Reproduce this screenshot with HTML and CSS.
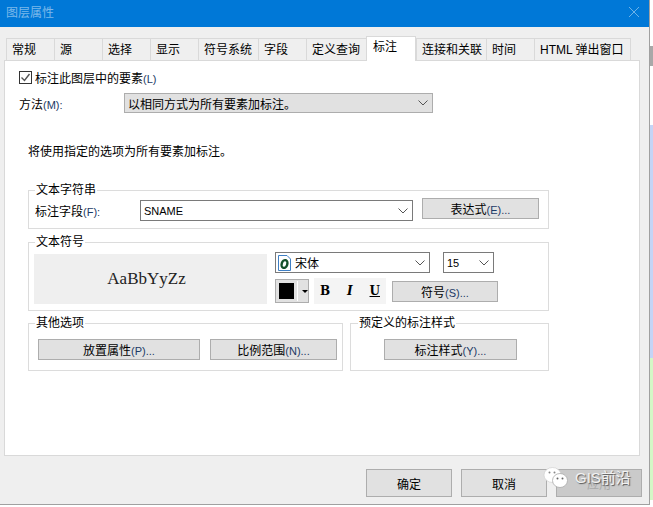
FILE: index.html
```html
<!DOCTYPE html>
<html lang="zh-CN">

<head>
    <meta charset="UTF-8">
    <title>图层属性</title>
    <link rel="stylesheet" href="styles.css">
</head>

<body>
    <svg class="defs" width="0" height="0">
        <symbol id="chevron" viewBox="0 0 10 6">
            <polyline points="0.5,0.5 5,5 9.5,0.5" fill="none" stroke="#555" stroke-width="1" />
        </symbol>
    </svg>

    <div class="screen">
        <div class="window">
            <div class="titlebar">
                <span class="title">图层属性</span>
                <svg class="close" width="10" height="10" viewBox="0 0 10 10">
                    <path d="M0 0L10 10M10 0L0 10" stroke="#6db2e8" stroke-width="1" />
                </svg>
            </div>

            <div class="tabs">
                <div class="tab w48">常规</div>
                <div class="tab w48">源</div>
                <div class="tab w48">选择</div>
                <div class="tab w48">显示</div>
                <div class="tab w60">符号系统</div>
                <div class="tab w48">字段</div>
                <div class="tab w60">定义查询</div>
                <div class="tab active">标注</div>
                <div class="tab w70">连接和关联</div>
                <div class="tab w48">时间</div>
                <div class="tab w97">HTML 弹出窗口</div>
            </div>

            <div class="panel">
                <label class="check-row">
                    <span class="checkbox">
                        <svg width="11" height="11" viewBox="0 0 11 11">
                            <polyline points="1.5,5.5 4.5,8.5 9.5,2" fill="none" stroke="#555" stroke-width="1.4" />
                        </svg>
                    </span>
                    <span>标注此图层中的要素<span class="key">(L)</span></span>
                </label>

                <div class="method-row">
                    <span class="method-label">方法<span class="key">(M):</span></span>
                    <div class="combo method-combo">
                        <span>以相同方式为所有要素加标注。</span>
                        <svg class="chevron" width="10" height="6"><use href="#chevron" /></svg>
                    </div>
                </div>

                <p class="note">将使用指定的选项为所有要素加标注。</p>

                <fieldset class="group group-string">
                    <legend>文本字符串</legend>
                    <div class="group-body">
                        <span class="field-label">标注字段<span class="key">(F):</span></span>
                        <div class="combo field-combo">
                            <span class="latin">SNAME</span>
                            <svg class="chevron" width="10" height="6"><use href="#chevron" /></svg>
                        </div>
                        <button class="btn btn-expr">表达式<span class="key">(E)...</span></button>
                    </div>
                </fieldset>

                <fieldset class="group group-symbol">
                    <legend>文本符号</legend>
                    <div class="group-body">
                        <div class="preview">AaBbYyZz</div>
                        <div class="symbol-controls">
                            <div class="symbol-row">
                                <div class="combo font-combo">
                                    <svg class="font-icon" width="15" height="18" viewBox="0 0 15 18">
                                        <path d="M1.5 1.5H10L13.5 5V16.5H1.5Z" fill="#fff" stroke="#3f7fc4" />
                                        <ellipse cx="7.5" cy="10" rx="2.8" ry="4" transform="rotate(18 7.5 10)" fill="none" stroke="#14502a" stroke-width="2.4" />
                                    </svg>
                                    <span>宋体</span>
                                    <svg class="chevron" width="10" height="6"><use href="#chevron" /></svg>
                                </div>
                                <div class="combo size-combo">
                                    <span class="latin">15</span>
                                    <svg class="chevron" width="10" height="6"><use href="#chevron" /></svg>
                                </div>
                            </div>
                            <div class="symbol-row style-row">
                                <div class="color-btn">
                                    <span class="swatch"></span>
                                    <span class="color-sep"></span>
                                    <span class="color-arrow"></span>
                                </div>
                                <div class="style-btns">
                                    <span class="style-b">B</span>
                                    <span class="style-i">I</span>
                                    <span class="style-u">U</span>
                                </div>
                                <button class="btn btn-symbol">符号<span class="key">(S)...</span></button>
                            </div>
                        </div>
                    </div>
                </fieldset>

                <div class="group-row">
                    <fieldset class="group group-other">
                        <legend>其他选项</legend>
                        <div class="group-body">
                            <button class="btn btn-place">放置属性<span class="key">(P)...</span></button>
                            <button class="btn btn-scale">比例范围<span class="key">(N)...</span></button>
                        </div>
                    </fieldset>
                    <fieldset class="group group-preset">
                        <legend>预定义的标注样式</legend>
                        <div class="group-body">
                            <button class="btn btn-style">标注样式<span class="key">(Y)...</span></button>
                        </div>
                    </fieldset>
                </div>
            </div>

            <div class="footer">
                <button class="btn btn-footer">确定</button>
                <button class="btn btn-footer">取消</button>
                <button class="btn btn-footer btn-disabled">应用</button>
            </div>
        </div>

        <div class="strip">
            <div class="strip-blank"></div>
            <div class="strip-gray"></div>
            <div class="strip-white"></div>
            <div class="strip-blue"></div>
            <div class="strip-green"></div>
        </div>

        <!-- watermark over the dialog -->
        <div class="watermark">
            <svg width="26" height="22" viewBox="0 0 26 22">
                <ellipse cx="9.5" cy="8" rx="8.5" ry="7.5" fill="#fff" stroke="#ccc" stroke-width="0.6" />
                <ellipse cx="17" cy="13.5" rx="7.5" ry="7" fill="#fff" stroke="#aaa" stroke-width="0.8" />
                <circle cx="6.5" cy="5.5" r="1" fill="#888" />
                <circle cx="11.5" cy="5.5" r="1" fill="#888" />
                <circle cx="14.5" cy="11.5" r="1" fill="#666" />
                <circle cx="19.5" cy="11.5" r="1" fill="#666" />
            </svg>
            <span>GIS前沿</span>
        </div>
    </div>
</body>

</html>
```

FILE: styles.css
```css
* {
    margin: 0;
    padding: 0;
    box-sizing: border-box;
}

body {
    background: #fff;
    color: #000;
    font-family: "Liberation Sans", "Noto Sans CJK SC", sans-serif;
    font-size: 12px;
    overflow: hidden;
}

.defs {
    position: absolute;
}

.screen {
    position: relative;
    display: flex;
    width: 653px;
    height: 507px;
}

.window {
    width: 650px;
    height: 505px;
    background: #efefef;
    border-right: 1px solid #a0a0a0;
    border-bottom: 1px solid #a0a0a0;
}

.titlebar {
    display: flex;
    align-items: center;
    justify-content: space-between;
    height: 27px;
    padding: 0 10px 5px 6px;
    background: #0078d7;
}

.title {
    color: #7db9ea;
}

.close {
    margin-bottom: -1px;
}

/* tabs */
.tabs {
    display: flex;
    align-items: flex-end;
    height: 33px;
    padding-left: 6px;
}

.tab {
    height: 22px;
    padding: 2px 0 0 5px;
    line-height: 18px;
    border: 1px solid #d9d9d9;
    border-bottom: none;
    border-right: none;
}

.w48 { width: 48px; }
.w60 { width: 60px; }
.w70 { width: 70px; }
.w97 { width: 97px; border-right: 1px solid #d9d9d9; }

.tab.active {
    position: relative;
    width: 50px;
    height: 25px;
    margin-bottom: -1px;
    padding: 1px 0 0 6px;
    background: #fff;
    border-right: 1px solid #d9d9d9;
    z-index: 1;
}

.panel {
    width: 636px;
    height: 396px;
    margin-left: 4px;
    padding: 8px 0 0 14px;
    background: #fff;
    border: 1px solid #d9d9d9;
}

.key {
    font-size: 11px;
    color: #1c3a66;
}

.check-row {
    display: flex;
    align-items: center;
    height: 17px;
    gap: 3px;
}

.checkbox {
    display: flex;
    align-items: center;
    justify-content: center;
    width: 13px;
    height: 13px;
    border: 1px solid #333;
}

.method-row {
    display: flex;
    align-items: center;
    margin-top: 7px;
}

.method-label {
    width: 105px;
}

.combo {
    display: flex;
    align-items: center;
    height: 21px;
    padding-left: 3px;
    background: #fff;
    border: 1px solid #7a7a7a;
}

.combo .chevron {
    margin-left: auto;
    margin-right: 4px;
}

.method-combo {
    width: 309px;
    height: 20px;
    background: #e1e1e1;
    border-color: #adadad;
}

.note {
    height: 16px;
    margin: 31px 0 0 9px;
    line-height: 16px;
}

.latin {
    font-size: 11px;
}

/* group boxes */
.group {
    margin-left: 9px;
    border: 1px solid #dcdcdc;
}

.group legend {
    height: 16px;
    margin-left: 6px;
    padding: 0 1px;
    line-height: 16px;
}

.group-body {
    display: flex;
    align-items: flex-start;
}

.group-string {
    width: 521px;
    height: 47px;
    margin-top: 22px;
}

.group-string .group-body {
    padding-left: 6px;
}

.field-label {
    width: 105px;
    margin-top: 4px;
}

.field-combo {
    width: 273px;
    margin-top: 2px;
}

.btn {
    height: 21px;
    font-family: inherit;
    font-size: 12px;
    color: #000;
    background: #e1e1e1;
    border: 1px solid #adadad;
}

.btn-expr {
    width: 117px;
    margin-left: 9px;
}

.group-symbol {
    width: 521px;
    height: 77px;
    margin-top: 5px;
}

.group-symbol .group-body {
    padding-left: 5px;
}

.preview {
    width: 233px;
    height: 50px;
    margin-top: 4px;
    padding-right: 8px;
    font-family: "Liberation Serif", serif;
    font-size: 17px;
    line-height: 50px;
    text-align: center;
    color: #222;
    background: #efefef;
}

.symbol-controls {
    margin: 2px 0 0 8px;
}

.symbol-row {
    display: flex;
    align-items: flex-start;
}

.style-row {
    margin-top: 5px;
}

.font-combo {
    width: 155px;
    padding-left: 1px;
    gap: 3px;
}

.size-combo {
    width: 51px;
    margin-left: 13px;
}

.color-btn {
    display: flex;
    align-items: center;
    width: 34px;
    height: 24px;
    margin-top: 1px;
    padding-left: 3px;
    background: #e1e1e1;
    border: 1px solid #adadad;
}

.swatch {
    width: 16px;
    height: 16px;
    background: #000;
}

.color-sep {
    width: 1px;
    height: 20px;
    margin-left: 3px;
    background: #fff;
}

.color-arrow {
    width: 0;
    height: 0;
    margin-left: 4px;
    border-top: 3px solid #000;
    border-left: 3px solid transparent;
    border-right: 3px solid transparent;
}

.style-btns {
    display: flex;
    align-items: center;
    justify-content: space-between;
    width: 72px;
    height: 26px;
    margin-left: 5px;
    padding: 0 6px;
    font-family: "DejaVu Serif", serif;
    font-size: 12px;
    font-weight: bold;
    background: #f4f4f4;
}

.style-i {
    font-style: italic;
}

.style-u {
    text-decoration: underline;
}

.btn-symbol {
    width: 106px;
    margin: 3px 0 0 6px;
}

.group-row {
    display: flex;
    gap: 7px;
    margin-top: 4px;
    margin-left: 9px;
}

.group-row .group {
    height: 56px;
    margin-left: 0;
}

.group-row .group-body {
    padding-top: 8px;
}

.group-other {
    width: 315px;
}

.group-other .group-body {
    padding-left: 9px;
}

.btn-place {
    width: 162px;
}

.btn-scale {
    width: 127px;
    margin-left: 10px;
}

.group-preset {
    width: 199px;
}

.group-preset legend {
    margin-left: 7px;
}

.group-preset .group-body {
    padding-left: 33px;
}

.btn-style {
    width: 133px;
}

/* bottom buttons */
.footer {
    display: flex;
    gap: 9px;
    padding: 13px 0 0 366px;
}

.btn-footer {
    width: 86px;
    height: 28px;
}

.btn-disabled {
    color: #a8a8a8;
    background: #cacaca;
}

/* sliver of the window behind */
.strip {
    display: flex;
    flex-direction: column;
    width: 3px;
    height: 500px;
}

.strip-blank { height: 46px; }
.strip-gray { height: 20px; background: #a8a8a8; }
.strip-white { height: 59px; }
.strip-blue { height: 233px; background: #c4d4f6; }
.strip-green { height: 142px; background: #d4f7c6; }

.watermark {
    position: absolute;
    top: 467px;
    left: 543px;
    display: flex;
    align-items: flex-start;
    gap: 6px;
    color: #f2f2f2;
    font-size: 15px;
    line-height: 22px;
    text-shadow: 1px 1px 1px #555;
}
```
